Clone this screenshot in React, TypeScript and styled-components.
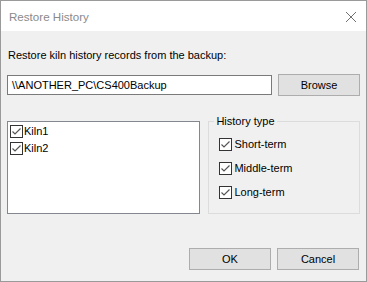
import styled, { createGlobalStyle } from 'styled-components';

const GlobalStyle = createGlobalStyle`
  html, body {
    margin: 0;
    padding: 0;
    background: #ffffff;
  }
  body {
    font-family: "Liberation Sans", Arial, sans-serif;
    font-size: 11px;
    color: #000000;
  }
`;

function CheckBox() {
  return (
    <Box width="13" height="13" viewBox="0 0 13 13">
      <rect x="0.5" y="0.5" width="12" height="12" fill="#ffffff" stroke="#333333" />
      <polyline points="2.5,6.5 5,9 10.5,3.5" fill="none" stroke="#555555" strokeWidth="1.2" />
    </Box>
  );
}

export default function App() {
  const kilns = ['Kiln1', 'Kiln2'];
  const types = ['Short-term', 'Middle-term', 'Long-term'];

  return (
    <>
      <GlobalStyle />
      <Window>
        <TitleBar>
          <Title>Restore History</Title>
          <CloseIcon width="12" height="12" viewBox="0 0 12 12">
            <path d="M1 1 L11 11 M11 1 L1 11" stroke="#707070" strokeWidth="1" fill="none" />
          </CloseIcon>
        </TitleBar>
        <Body>
          <Label>Restore kiln history records from the backup:</Label>
          <PathRow>
            <PathInput>\\ANOTHER_PC\CS400Backup</PathInput>
            <Button>Browse</Button>
          </PathRow>
          <Main>
            <ListBox>
              {kilns.map((k) => (
                <ListItem key={k}>
                  <CheckBox />
                  <span>{k}</span>
                </ListItem>
              ))}
            </ListBox>
            <GroupBox>
              <Legend>History type</Legend>
              {types.map((t) => (
                <GroupItem key={t}>
                  <CheckBox />
                  <span>{t}</span>
                </GroupItem>
              ))}
            </GroupBox>
          </Main>
          <ButtonRow>
            <Button>OK</Button>
            <Button>Cancel</Button>
          </ButtonRow>
        </Body>
      </Window>
    </>
  );
}

const Window = styled.div`
  width: 367px;
  height: 282px;
  box-sizing: border-box;
  border: 1px solid #9a9a9a;
  display: flex;
  flex-direction: column;
  background: #f0f0f0;
`;

const TitleBar = styled.div`
  height: 30px;
  flex-shrink: 0;
  background: #ffffff;
  display: flex;
  align-items: center;
  justify-content: space-between;
  padding: 0 9px 0 8px;
`;

const Title = styled.span`
  color: #8a8a8a;
  font-size: 11.6px;
`;

const CloseIcon = styled.svg`
  display: block;
  margin-top: 1px;
`;

const Body = styled.div`
  flex: 1;
  display: flex;
  flex-direction: column;
  padding: 16px 6px 0 6px;
`;

const Label = styled.div`
  line-height: 16px;
  height: 16px;
  padding-left: 1px;
`;

const PathRow = styled.div`
  display: flex;
  align-items: center;
  gap: 6px;
  margin-top: 11px;
`;

const PathInput = styled.div`
  box-sizing: border-box;
  width: 265px;
  height: 20px;
  background: #ffffff;
  border: 1px solid #7a7a7a;
  padding: 0 4px;
  line-height: 18px;
`;

const Button = styled.div`
  box-sizing: border-box;
  width: 82px;
  height: 22px;
  background: #e1e1e1;
  border: 1px solid #adadad;
  display: flex;
  align-items: center;
  justify-content: center;
`;

const Main = styled.div`
  display: flex;
  gap: 8px;
  margin-top: 25px;
  height: 93px;
`;

const ListBox = styled.div`
  box-sizing: border-box;
  width: 194px;
  height: 93px;
  background: #ffffff;
  border: 1px solid #828790;
  padding: 3px 2px;
  display: flex;
  flex-direction: column;
  gap: 4px;
`;

const ListItem = styled.div`
  display: flex;
  align-items: center;
  gap: 1px;
  height: 13px;
  line-height: 13px;
`;

const GroupBox = styled.div`
  position: relative;
  box-sizing: border-box;
  width: 152px;
  height: 93px;
  border: 1px solid #dcdcdc;
  padding: 16px 0 0 10px;
  display: flex;
  flex-direction: column;
  gap: 11px;
`;

const Legend = styled.span`
  position: absolute;
  top: -9px;
  left: 5px;
  padding: 0 2px;
  background: #f0f0f0;
  line-height: 16px;
`;

const GroupItem = styled.div`
  display: flex;
  align-items: center;
  gap: 2px;
  height: 13px;
  line-height: 13px;
`;

const Box = styled.svg`
  display: block;
  flex-shrink: 0;
`;

const ButtonRow = styled.div`
  display: flex;
  justify-content: flex-end;
  gap: 6px;
  margin-top: 34px;
  padding-right: 1px;
`;
